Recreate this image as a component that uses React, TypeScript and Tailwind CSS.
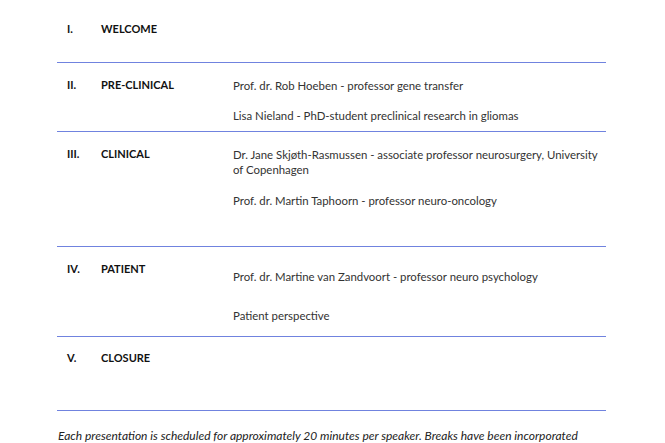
import React from "react";

const Row = ({ num, label, children, h, pt = "pt-[15px]" }: { num: string; label: string; children?: React.ReactNode; h: string; pt?: string }) => (
  <div className={`flex ${h} ${pt} border-b border-[#7083df]`}>
    <div className="w-[44px] pl-[10px] font-bold text-[11px] leading-[14px] text-[#111]">{num}</div>
    <div className="w-[132px] font-bold text-[11px] leading-[14px] text-[#111]">{label}</div>
    <div className="flex-1 text-[11.4px] leading-[15px] text-[#333] whitespace-nowrap">{children}</div>
  </div>
);

export default function App() {
  return (
    <div className="w-[665px] h-[443px] bg-white overflow-hidden" style={{ fontFamily: "Lato, 'Open Sans', sans-serif" }}>
      <div className="ml-[57px] w-[549px]">
        <Row num="I." label="WELCOME" h="h-[63px]" pt="pt-[22px]" />
        <Row num="II." label="PRE-CLINICAL" h="h-[69px]">
          <div>Prof. dr. Rob Hoeben - professor gene transfer</div>
          <div className="mt-[15px]">Lisa Nieland - PhD-student preclinical research in gliomas</div>
        </Row>
        <Row num="III." label="CLINICAL" h="h-[115px]">
          <div>
            Dr. Jane Skjøth-Rasmussen - associate professor neurosurgery, University
            <br />
            of Copenhagen
          </div>
          <div className="mt-[16px]">Prof. dr. Martin Taphoorn - professor neuro-oncology</div>
        </Row>
        <Row num="IV." label="PATIENT" h="h-[90px]">
          <div className="mt-[7px]">Prof. dr. Martine van Zandvoort - professor neuro psychology</div>
          <div className="mt-[24px]">Patient perspective</div>
        </Row>
        <Row num="V." label="CLOSURE" h="h-[74px]" pt="pt-[14px]" />
      </div>
      <div className="ml-[58px] mt-[17px] text-[12px] leading-[15px] italic text-[#222]">
        Each presentation is scheduled for approximately 20 minutes per speaker. Breaks have been incorporated
      </div>
    </div>
  );
}
